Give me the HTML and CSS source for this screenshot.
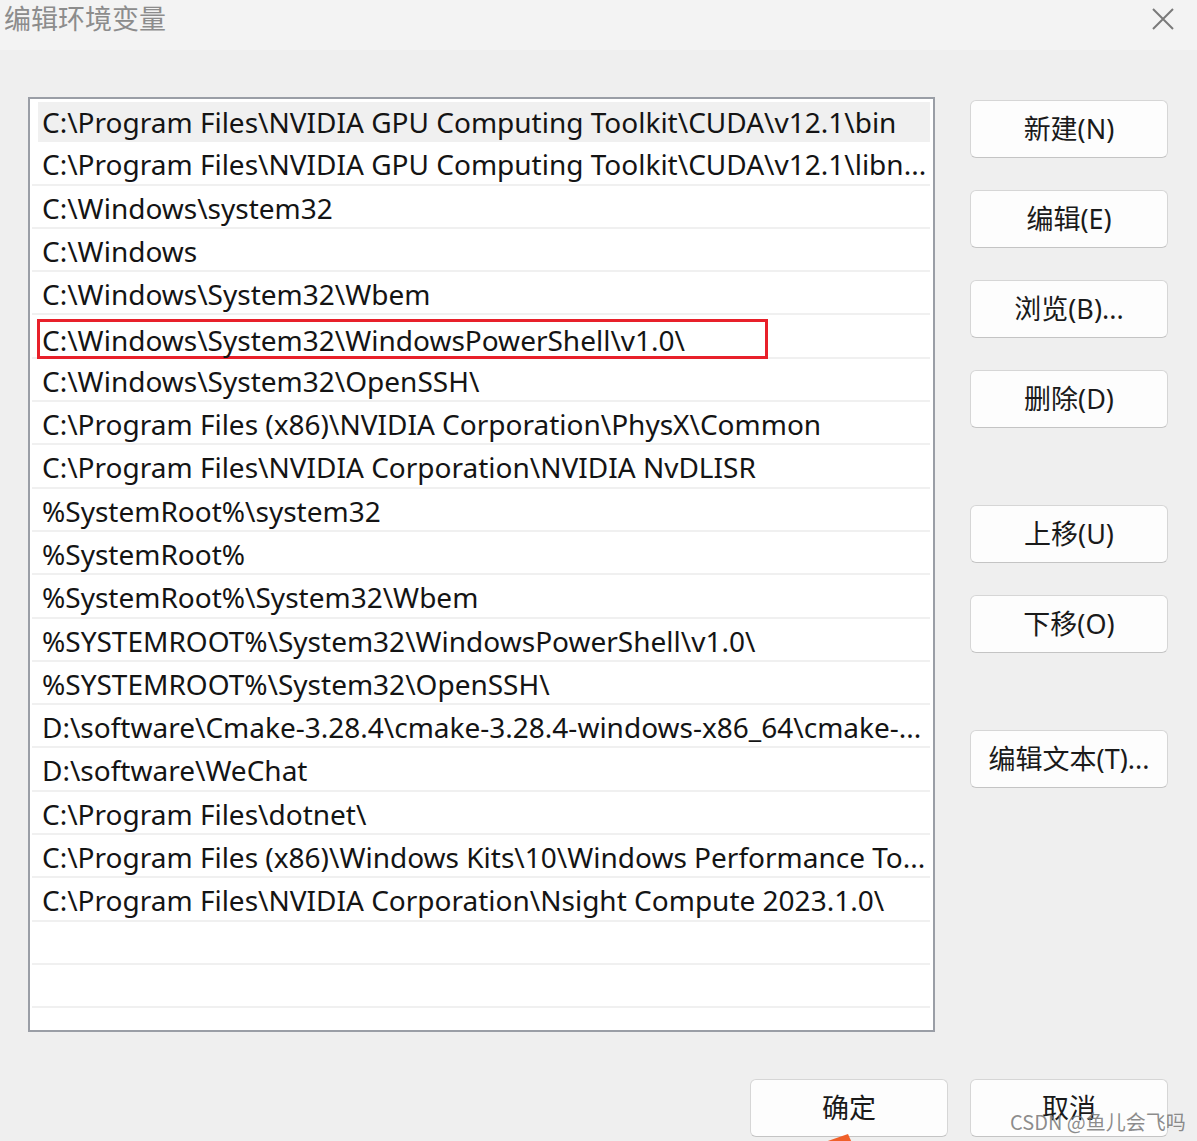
FILE: index.html
```html
<!DOCTYPE html>
<html lang="zh-CN">
<head>
<meta charset="UTF-8">
<title>编辑环境变量</title>
<link rel="stylesheet" href="styles.css">
</head>
<body>

<div class="titlebar">
  <span class="title">编辑环境变量</span>
  <svg class="close" width="24" height="24" viewBox="0 0 24 24">
    <path d="M2 2 L22 22 M22 2 L2 22" stroke="#7a7a7a" stroke-width="2" fill="none"/>
  </svg>
</div>

<div class="main">
  <div class="list">
    <div class="item selected">C:\Program Files\NVIDIA GPU Computing Toolkit\CUDA\v12.1\bin</div>
    <div class="item">C:\Program Files\NVIDIA GPU Computing Toolkit\CUDA\v12.1\libn...</div>
    <div class="item">C:\Windows\system32</div>
    <div class="item">C:\Windows</div>
    <div class="item">C:\Windows\System32\Wbem</div>
    <div class="item has-mark"><span class="marked">C:\Windows\System32\WindowsPowerShell\v1.0\</span></div>
    <div class="item">C:\Windows\System32\OpenSSH\</div>
    <div class="item">C:\Program Files (x86)\NVIDIA Corporation\PhysX\Common</div>
    <div class="item">C:\Program Files\NVIDIA Corporation\NVIDIA NvDLISR</div>
    <div class="item">%SystemRoot%\system32</div>
    <div class="item">%SystemRoot%</div>
    <div class="item">%SystemRoot%\System32\Wbem</div>
    <div class="item">%SYSTEMROOT%\System32\WindowsPowerShell\v1.0\</div>
    <div class="item">%SYSTEMROOT%\System32\OpenSSH\</div>
    <div class="item">D:\software\Cmake-3.28.4\cmake-3.28.4-windows-x86_64\cmake-...</div>
    <div class="item">D:\software\WeChat</div>
    <div class="item">C:\Program Files\dotnet\</div>
    <div class="item">C:\Program Files (x86)\Windows Kits\10\Windows Performance To...</div>
    <div class="item">C:\Program Files\NVIDIA Corporation\Nsight Compute 2023.1.0\</div>
    <div class="item"></div>
    <div class="item"></div>
  </div>

  <div class="side">
    <div class="group">
      <button class="btn">新建(N)</button>
      <button class="btn">编辑(E)</button>
      <button class="btn">浏览(B)...</button>
      <button class="btn">删除(D)</button>
    </div>
    <div class="group">
      <button class="btn">上移(U)</button>
      <button class="btn">下移(O)</button>
    </div>
    <div class="group">
      <button class="btn">编辑文本(T)...</button>
    </div>
  </div>
</div>

<div class="footer">
  <button class="btn">确定</button>
  <button class="btn">取消</button>
</div>

<svg class="arrow" width="40" height="12" viewBox="0 0 40 12">
  <polygon points="0,12 26,3 30,12" fill="#f0602a"/>
</svg>
<div class="watermark">CSDN @鱼儿会飞吗</div>

</body>
</html>
```

FILE: styles.css
```css
body {
  margin: 0;
  width: 1197px;
  height: 1141px;
  overflow: hidden;
  background-color: #efefef;
  font-family: "Noto Sans", "Noto Sans CJK SC", sans-serif;
  color: #1a1a1a;
  position: relative;
}

.titlebar {
  height: 50px;
  display: flex;
  align-items: flex-start;
  justify-content: space-between;
  background-color: #f3f3f3;
}

.title {
  font-family: "Noto Sans CJK SC", sans-serif;
  font-size: 27px;
  line-height: 36px;
  color: #8c8c8c;
  padding-left: 4px;
}

.close {
  margin: 7px 22px 0 0;
}

.main {
  display: flex;
  align-items: flex-start;
  padding: 47px 0 0 28px;
}

.list {
  width: 903px;
  height: 931px;
  border: 2px solid #9a9ea6;
  background-color: #ffffff;
  overflow: hidden;
  box-sizing: content-box;
}

.item {
  height: 41.3px;
  border-bottom: 2px solid #f0f0f0;
  margin: 0 3px 0 2px;
  padding-left: 10px;
  font-size: 28px;
  line-height: 45px;
  color: #141414;
  white-space: nowrap;
  overflow: hidden;
}

.item.selected {
  background-color: #f0f0f0;
  margin-left: 8px;
  padding-left: 4px;
  border-top: 3px solid #ffffff;
  height: 38.3px;
  line-height: 41px;
}

.item.has-mark {
  overflow: visible;
  padding-top: 4px;
  height: 37.3px;
}

.marked {
  display: block;
  box-sizing: border-box;
  width: 731px;
  height: 40px;
  margin-left: -5px;
  padding-left: 2px;
  border: 3px solid #e8202a;
  line-height: 36px;
}

.side {
  display: flex;
  flex-direction: column;
  gap: 77px;
  margin-left: 35px;
  padding-top: 3px;
}

.group {
  display: flex;
  flex-direction: column;
  gap: 32px;
}

.btn {
  width: 198px;
  height: 58px;
  background-color: #fdfdfd;
  border: 1px solid #d6d6d6;
  border-bottom-color: #c4c4c4;
  border-radius: 6px;
  font-family: "Noto Sans", "Noto Sans CJK SC", sans-serif;
  font-size: 27px;
  line-height: 54px;
  color: #1a1a1a;
  padding: 0;
}

.footer {
  display: flex;
  justify-content: flex-end;
  gap: 22px;
  padding: 47px 29px 0 0;
}

.arrow {
  position: absolute;
  left: 822px;
  top: 1131px;
}

.watermark {
  position: absolute;
  left: 1010px;
  top: 1107px;
  font-family: "Noto Sans CJK SC", sans-serif;
  font-size: 20px;
  line-height: 30px;
  color: rgba(120, 120, 120, 0.85);
}
```
